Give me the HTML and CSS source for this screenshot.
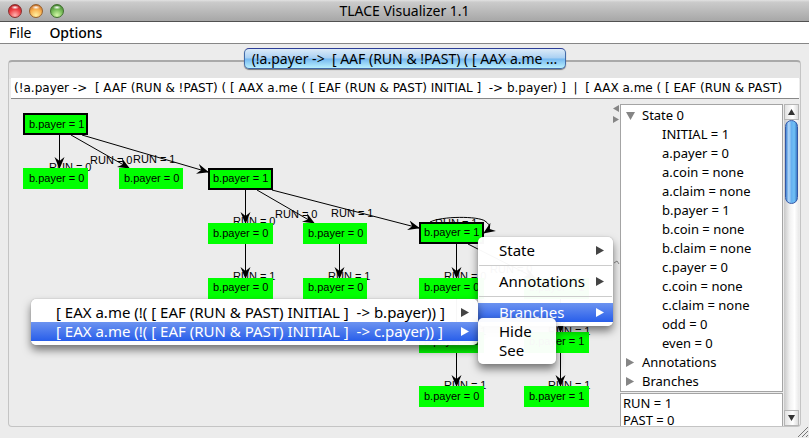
FILE: index.html
```html
<!DOCTYPE html>
<html lang="en">
<head>
<meta charset="utf-8">
<title>TLACE Visualizer 1.1</title>
<link rel="stylesheet" href="styles.css">
</head>
<body>
<div class="window">
  <header class="titlebar">
    <div class="lights">
      <button class="light red" aria-label="Close"></button>
      <button class="light amber" aria-label="Minimize"></button>
      <button class="light green" aria-label="Zoom"></button>
    </div>
    <h1>TLACE Visualizer 1.1</h1>
  </header>
  <nav class="menubar">
    <button>File</button>
    <button class="strong">Options</button>
  </nav>
  <main class="content">
    <button class="tab">(!a.payer -&gt;&nbsp; [ AAF (RUN &amp; !PAST) ( [ AAX a.me ...</button>
    <section class="pane">
      <div class="formula">(!a.payer -&gt;&nbsp; [ AAF (RUN &amp; !PAST) ( [ AAX a.me ( [ EAF (RUN &amp; PAST) INITIAL ]&nbsp; -&gt; b.payer) ]&nbsp; |&nbsp; [ AAX a.me ( [ EAF (RUN &amp; PAST)</div>
      <div class="split">
        <div class="canvas">
          <svg class="graph" width="601" height="326" viewBox="11 99 601 326">
            <defs>
              <marker id="arrow" markerUnits="userSpaceOnUse" markerWidth="12" markerHeight="12" refX="11" refY="6" orient="auto">
                <path d="M0 1 L12 6 L0 11 L4 6 Z"/>
              </marker>
            </defs>
            <g class="edges">
              <path d="M59.500 135V168"/><path d="M71 135L129 168"/><path d="M82 135L208 172"/>
              <path d="M245.500 190V223"/><path d="M257 190L314 223"/><path d="M272 190L419 228"/>
              <path d="M245.500 244V278"/><path d="M339.500 244V278"/>
              <path d="M456.500 244V278"/><path d="M468 244L535 278"/>
              <path d="M456.500 299V332"/><path d="M560.500 299V332"/>
              <path d="M456.500 353V386"/><path d="M560.500 353V386"/>
              <path d="M430 222C442 216 478 216 485 221C492 226 490 229 484 233"/>
            </g>
            <g class="label">
              <text x="49" y="171">RUN = 0</text><text x="90" y="164">RUN = 0</text><text x="133" y="163">RUN = 1</text>
              <text x="233" y="225">RUN = 0</text><text x="275" y="218">RUN = 0</text><text x="331" y="217">RUN = 1</text>
              <text x="233" y="280">RUN = 1</text><text x="328" y="280">RUN = 1</text>
              <text x="435" y="227">RUN = 1</text>
              <text x="444" y="280">RUN = 0</text><text x="490" y="273">RUN = 0</text>
              <text x="444" y="335">RUN = 1</text><text x="548" y="335">RUN = 1</text>
              <text x="444" y="389">RUN = 1</text><text x="548" y="389">RUN = 1</text>
            </g>
            <g class="state">
              <rect x="23" y="168" width="65" height="21"/><rect x="119" y="168" width="64" height="21"/>
              <rect x="208" y="223" width="65" height="21"/><rect x="303" y="223" width="64" height="21"/>
              <rect x="208" y="278" width="65" height="21"/><rect x="303" y="278" width="64" height="21"/>
              <rect x="419" y="278" width="65" height="21"/><rect x="524" y="278" width="65" height="21"/>
              <rect x="419" y="332" width="65" height="21"/><rect x="524" y="332" width="65" height="21"/>
              <rect x="419" y="386" width="65" height="21"/><rect x="524" y="386" width="65" height="21"/>
            </g>
            <g class="state expanded">
              <rect x="24" y="114" width="63" height="20"/><rect x="209" y="169" width="63" height="20"/><rect x="420" y="223" width="63" height="20"/>
            </g>
            <g class="label">
              <text x="29" y="128">b.payer = 1</text>
              <text x="29" y="182">b.payer = 0</text><text x="124" y="182">b.payer = 0</text><text x="213" y="182">b.payer = 1</text>
              <text x="213" y="237">b.payer = 0</text><text x="308" y="237">b.payer = 0</text><text x="424" y="236">b.payer = 1</text>
              <text x="213" y="291">b.payer = 0</text><text x="308" y="291">b.payer = 0</text><text x="424" y="291">b.payer = 0</text><text x="529" y="291">b.payer = 1</text>
              <text x="424" y="345">b.payer = 0</text><text x="529" y="345">b.payer = 1</text>
              <text x="424" y="400">b.payer = 0</text><text x="529" y="400">b.payer = 1</text>
            </g>
          </svg>
        </div>
        <div class="divider">
          <svg width="8" height="160" viewBox="0 0 8 160"><path d="M7 1V8L1 4.500ZM1 12V19L7 15.500Z" fill="#858585"/><path d="M2 159L5 157L7 160" fill="none" stroke="#888"/></svg>
        </div>
        <aside class="side">
          <ul class="tree">
            <li><i class="twist open"></i>State 0
              <ul>
                <li>INITIAL = 1</li><li>a.payer = 0</li><li>a.coin = none</li><li>a.claim = none</li>
                <li>b.payer = 1</li><li>b.coin = none</li><li>b.claim = none</li>
                <li>c.payer = 0</li><li>c.coin = none</li><li>c.claim = none</li>
                <li>odd = 0</li><li>even = 0</li>
              </ul>
            </li>
            <li><i class="twist"></i>Annotations</li>
            <li><i class="twist"></i>Branches</li>
          </ul>
          <div class="values"><p>RUN = 1</p><p>PAST = 0</p></div>
        </aside>
        <div class="scrollbar">
          <button class="step" aria-label="Scroll up"><svg width="7" height="6"><path d="M3.500 0L7 6H0Z"/></svg></button>
          <div class="track"><div class="thumb"></div></div>
          <button class="step" aria-label="Scroll down"><svg width="7" height="6"><path d="M0 0H7L3.500 6Z"/></svg></button>
        </div>
      </div>
    </section>
  </main>
  <svg class="grip" width="12" height="12" viewBox="0 0 12 12"><path d="M1 11L11 1M5 11L11 5M9 11L11 9" stroke="#777"/></svg>

  <div class="menu context">
    <button>State<i></i></button>
    <hr>
    <button>Annotations<i></i></button>
    <hr>
    <button class="active">Branches<i></i></button>
  </div>
  <div class="menu branches">
    <button>[ EAX a.me (!( [ EAF (RUN &amp; PAST) INITIAL ]&nbsp; -&gt; b.payer)) ]<i></i></button>
    <button class="active">[ EAX a.me (!( [ EAF (RUN &amp; PAST) INITIAL ]&nbsp; -&gt; c.payer)) ]<i></i></button>
  </div>
  <div class="menu actions">
    <button>Hide</button>
    <button>See</button>
  </div>
</div>
</body>
</html>
```
FILE: styles.css
```css
* { box-sizing: border-box; }
body {
  margin: 0;
  font: 14px/20px "Noto Sans", sans-serif;
  color: #000;
}
button {
  margin: 0;
  padding: 0;
  border: 0;
  background: none;
  color: inherit;
  font: inherit;
}
ul { margin: 0; padding: 0; list-style: none; }
p { margin: 0; }
svg { display: block; }

.window {
  position: relative;
  display: flex;
  flex-direction: column;
  height: 100vh;
  overflow: hidden;
  background: #ececec;
}
.titlebar {
  display: grid;
  grid-template-columns: 1fr auto 1fr;
  align-items: center;
  flex: none;
  height: 22px;
  padding: 0 8px;
  border-bottom: 1px solid #515151;
  background: linear-gradient(#e2e2e2, #cbcbcb 10%, #a7a7a7);
}
.titlebar h1 { margin: 0; font-size: 14px; font-weight: 400; }
.lights { display: flex; gap: 7px; }
.light {
  width: 14px;
  height: 14px;
  border: 1px solid;
  border-radius: 50%;
}
.red { border-color: #86312f; background: radial-gradient(4px 2px at 50% 20%, #fff, #fff0), radial-gradient(circle at 50% 85%, #ffb3b0, #ee4145 50%, #a4141a); }
.amber { border-color: #95602c; background: radial-gradient(4px 2px at 50% 20%, #fff, #fff0), radial-gradient(circle at 50% 85%, #fff0a0, #f8b252 50%, #b7571e); }
.green { border-color: #41702e; background: radial-gradient(4px 2px at 50% 20%, #fff, #fff0), radial-gradient(circle at 50% 85%, #d4f8a8, #76bb58 50%, #337026); }

.menubar {
  display: flex;
  gap: 18px;
  flex: none;
  height: 22px;
  padding: 0 9px;
  border-bottom: 1px solid #868686;
  background: #fff;
  line-height: 22px;
}
.strong { font-weight: 500; }

.content {
  display: flex;
  flex-direction: column;
  align-items: center;
  flex: 1;
  min-height: 0;
  padding: 4px 8px 11px;
}
.tab {
  z-index: 1;
  width: 322px;
  height: 21px;
  flex: none;
  border: 1px solid #426ba8;
  border-top-color: #2d3d97;
  border-radius: 5px;
  background: linear-gradient(#dcebf8, #a9d0f3 48%, #75b8f0 52%, #b9f0fe);
  box-shadow: 0 1px 1px #777;
  line-height: 18px;
  white-space: nowrap;
}
.pane {
  display: flex;
  flex-direction: column;
  align-self: stretch;
  flex: 1;
  min-height: 0;
  margin-top: -9px;
  padding: 16px 1px 0 2px;
  border: 1px solid #c4c4c4;
  border-top: 2px solid #a9a9a9;
  border-radius: 4px;
  background: linear-gradient(#e4e4e4 17px, #ececec 17px);
}
.formula {
  flex: none;
  height: 21px;
  padding-left: 3px;
  border-bottom: 1px solid #888;
  background: #fff;
  overflow: hidden;
  font: 12px/20px "DejaVu Sans", sans-serif;
  white-space: nowrap;
}
.split { display: flex; flex: 1; min-height: 0; }
.canvas { flex: 1; min-width: 0; overflow: hidden; }
.edges path { fill: none; stroke: #000; marker-end: url(#arrow); }
.edges marker path, marker path { fill: #000; stroke: none; }
.label { font: 11px "Liberation Sans", sans-serif; }
.state { fill: #0f0; }
.expanded { stroke: #000; stroke-width: 2; }
.divider { flex: none; width: 8px; padding-top: 5px; }
.side {
  display: flex;
  flex-direction: column;
  flex: none;
  width: 163px;
  padding-top: 5px;
  gap: 1px;
  font-size: 13px;
}
.tree {
  flex: 1;
  min-height: 0;
  overflow: hidden;
  border: 1px solid #a4a4a4;
  background: #fff;
  line-height: 19px;
  padding-top: 1px;
}
.tree > li { padding-left: 21px; }
.tree ul { padding-left: 20px; }
.twist {
  float: left;
  width: 9px;
  height: 9px;
  margin: 5px 7px 0 -16px;
  background: #858585;
  clip-path: polygon(0 0, 90% 50%, 0 100%);
}
.twist.open { clip-path: polygon(0 10%, 100% 10%, 50% 100%); }
.values {
  flex: none;
  height: 33px;
  padding: 1px 2px 0;
  overflow: hidden;
  border: 1px solid #a4a4a4;
  border-bottom: 0;
  background: #fff;
  line-height: 17px;
}
.scrollbar {
  display: flex;
  flex-direction: column;
  flex: none;
  width: 15px;
  margin: 5px 0 0 1px;
}
.step {
  display: grid;
  place-items: center;
  height: 16px;
  flex: none;
  border: 1px solid #b5b5b5;
  background: linear-gradient(90deg, #e2e2e2, #fff 60%, #ddd);
}
.step path { fill: #333; }
.track { flex: 1; background: linear-gradient(90deg, #c8c8c8, #f2f2f2 40%, #fff 70%, #e8e8e8); }
.thumb {
  height: 29%;
  margin: 0 1px;
  border: 1px solid #3458a6;
  border-radius: 7px;
  background: linear-gradient(90deg, #4385d3, #b2d7f8 25%, #66b0f0 50%, #6fc0f6 75%, #3c7dc7);
}
.grip { position: absolute; right: 0; bottom: 0; }

.menu {
  position: absolute;
  padding: 4px 0;
  border-radius: 5px;
  background: #fffffff7;
  box-shadow: 0 0 1px #777, 0 5px 9px #00000080;
  font-size: 15px;
}
.menu button {
  display: flex;
  align-items: center;
  justify-content: space-between;
  width: 100%;
  height: 19px;
  padding: 0 9px 0 21px;
  line-height: 19px;
  white-space: nowrap;
}
.menu i {
  width: 8px;
  height: 9px;
  background: #444;
  clip-path: polygon(0 0, 100% 50%, 0 100%);
}
.menu .active { background: linear-gradient(#6c93f0, #285eea); color: #fff; }
.menu .active i { background: #fff; }
.menu hr { margin: 5px 1px 6px; border: 0; border-top: 1px solid #ccc; }
.context { left: 478px; top: 237px; width: 135px; }
.branches { left: 31px; top: 299px; width: 447px; }
.branches button { padding-left: 25px; }
.actions { left: 478px; top: 318px; width: 78px; }
```
